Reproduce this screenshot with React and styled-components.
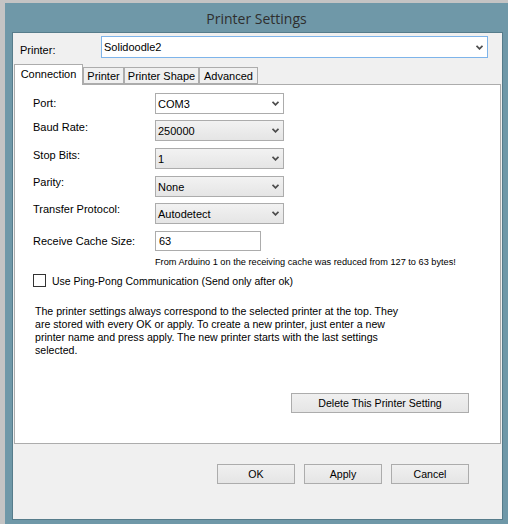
import React from "react";
import styled, { createGlobalStyle } from "styled-components";

const GlobalStyle = createGlobalStyle`
  html, body {
    margin: 0;
    padding: 0;
    width: 100%;
    height: 100%;
    overflow: hidden;
  }
  body {
    font-family: "Liberation Sans", Arial, sans-serif;
    font-size: 11px;
    color: #000;
  }
  #root {
    height: 100%;
  }
`;

const Desktop = styled.div`
  height: 100%;
  box-sizing: border-box;
  padding: 3px 0 0 5px;
  background: #c4c4c4;
  display: flex;
`;

const Window = styled.div`
  flex: 1;
  display: flex;
  flex-direction: column;
  background: #6f98a8;
`;

const TitleBar = styled.div`
  height: 30px;
  display: flex;
  align-items: center;
  justify-content: center;
  font-family: "Open Sans", "Noto Sans", sans-serif;
  font-size: 14px;
  color: #2e2e2e;
`;

const Client = styled.div`
  flex: 1;
  margin: 0 6px 5px 8px;
  background: #f0f0f0;
  box-shadow: 0 0 0 1px #567c8b;
  display: flex;
  flex-direction: column;
`;

const PrinterRow = styled.div`
  display: flex;
  align-items: center;
  height: 22px;
  margin-top: 3px;
`;

const PrinterLabel = styled.div`
  width: 88px;
  box-sizing: border-box;
  padding: 6px 0 0 7px;
`;

const Combo = styled.div`
  box-sizing: border-box;
  width: ${(p) => p.$width}px;
  height: ${(p) => p.$height || 21}px;
  display: flex;
  align-items: center;
  justify-content: space-between;
  padding: 0 4px 0 2px;
  border: 1px solid ${(p) => (p.$focused ? "#7eb4ea" : "#acacac")};
  background: ${(p) =>
    p.$editable ? "#fff" : "linear-gradient(#f2f2f2, #e5e5e5)"};
`;

const Chevron = () => (
  <svg width="7" height="5" viewBox="0 0 7 5">
    <polyline
      points="0.5,0.8 3.5,3.8 6.5,0.8"
      fill="none"
      stroke="#4d4d4d"
      strokeWidth="1.8"
    />
  </svg>
);

const Tabs = styled.div`
  display: flex;
  align-items: flex-end;
  height: 20px;
  margin: 6px 0 0 1px;
  position: relative;
  z-index: 1;
`;

const Tab = styled.div`
  box-sizing: border-box;
  width: ${(p) => p.$width}px;
  height: ${(p) => (p.$active ? 21 : 17)}px;
  margin-bottom: ${(p) => (p.$active ? -1 : 0)}px;
  display: flex;
  align-items: center;
  justify-content: center;
  padding-bottom: ${(p) => (p.$active ? 2 : 0)}px;
  border: 1px solid #acacac;
  border-bottom: ${(p) => (p.$active ? "none" : "1px solid #acacac")};
  background: ${(p) => (p.$active ? "#fff" : "#f0f0f0")};
`;

const Panel = styled.div`
  box-sizing: border-box;
  width: 487px;
  height: 360px;
  margin-left: 1px;
  background: #fff;
  border: 1px solid #acacac;
  display: flex;
  flex-direction: column;
  padding: 8px 0 0 18px;
`;

const FieldRow = styled.div`
  display: flex;
  align-items: flex-start;
  margin-top: ${(p) => p.$gap}px;
`;

const FieldLabel = styled.div`
  width: 122px;
  line-height: 13px;
  margin-top: ${(p) => p.$dy}px;
`;

const TextBox = styled.div`
  box-sizing: border-box;
  width: 106px;
  height: 20px;
  padding-left: 3px;
  display: flex;
  align-items: center;
  border: 1px solid #acacac;
  background: #fff;
`;

const Note = styled.div`
  margin: 5px 0 0 122px;
  font-size: 9.2px;
  line-height: 12px;
`;

const CheckRow = styled.div`
  display: flex;
  align-items: center;
  gap: 6px;
  margin-top: 6px;
  height: 13px;
  font-size: 10.5px;
`;

const CheckBox = styled.div`
  box-sizing: border-box;
  width: 13px;
  height: 13px;
  border: 1px solid #333;
  background: #fff;
`;

const Description = styled.div`
  margin: 18px 0 0 2px;
  font-size: 10.6px;
  line-height: 13px;
`;

const Button = styled.button`
  box-sizing: border-box;
  width: ${(p) => p.$width || 78}px;
  height: 20px;
  padding: 0;
  font-family: "Liberation Sans", Arial, sans-serif;
  font-size: 10.6px;
  color: #000;
  border: 1px solid #acacac;
  background: linear-gradient(#f0f0f0, #e5e5e5);
`;

const DeleteRow = styled.div`
  display: flex;
  justify-content: flex-end;
  margin: 36px 31px 0 0;
`;

const ButtonBar = styled.div`
  display: flex;
  justify-content: flex-end;
  gap: 9px;
  margin-top: 20px;
  padding-right: 33px;
`;

const fields = [
  { label: "Port:", value: "COM3", gap: 0, dy: 4, editable: true },
  { label: "Baud Rate:", value: "250000", gap: 6, dy: 1 },
  { label: "Stop Bits:", value: "1", gap: 7, dy: 1 },
  { label: "Parity:", value: "None", gap: 7, dy: 0 },
  { label: "Transfer Protocol:", value: "Autodetect", gap: 6, dy: 0 },
];

const tabs = [
  { name: "Connection", width: 69, active: true },
  { name: "Printer", width: 41 },
  { name: "Printer Shape", width: 75 },
  { name: "Advanced", width: 59 },
];

export default function App() {
  return (
    <>
      <GlobalStyle />
      <Desktop>
        <Window>
          <TitleBar>Printer Settings</TitleBar>
          <Client>
            <PrinterRow>
              <PrinterLabel>Printer:</PrinterLabel>
              <Combo $width={387} $height={22} $editable $focused>
                <span>Solidoodle2</span>
                <Chevron />
              </Combo>
            </PrinterRow>
            <Tabs>
              {tabs.map((t) => (
                <Tab key={t.name} $width={t.width} $active={t.active}>
                  {t.name}
                </Tab>
              ))}
            </Tabs>
            <Panel>
              {fields.map((f) => (
                <FieldRow key={f.label} $gap={f.gap}>
                  <FieldLabel $dy={f.dy}>{f.label}</FieldLabel>
                  <Combo $width={129} $editable={f.editable}>
                    <span>{f.value}</span>
                    <Chevron />
                  </Combo>
                </FieldRow>
              ))}
              <FieldRow $gap={7}>
                <FieldLabel $dy={4}>Receive Cache Size:</FieldLabel>
                <TextBox>63</TextBox>
              </FieldRow>
              <Note>
                From Arduino 1 on the receiving cache was reduced from 127 to 63
                bytes!
              </Note>
              <CheckRow>
                <CheckBox />
                <span>Use Ping-Pong Communication (Send only after ok)</span>
              </CheckRow>
              <Description>
                The printer settings always correspond to the selected printer at
                the top. They
                <br />
                are stored with every OK or apply. To create a new printer, just
                enter a new
                <br />
                printer name and press apply. The new printer starts with the last
                settings
                <br />
                selected.
              </Description>
              <DeleteRow>
                <Button $width={178}>Delete This Printer Setting</Button>
              </DeleteRow>
            </Panel>
            <ButtonBar>
              <Button>OK</Button>
              <Button>Apply</Button>
              <Button>Cancel</Button>
            </ButtonBar>
          </Client>
        </Window>
      </Desktop>
    </>
  );
}
